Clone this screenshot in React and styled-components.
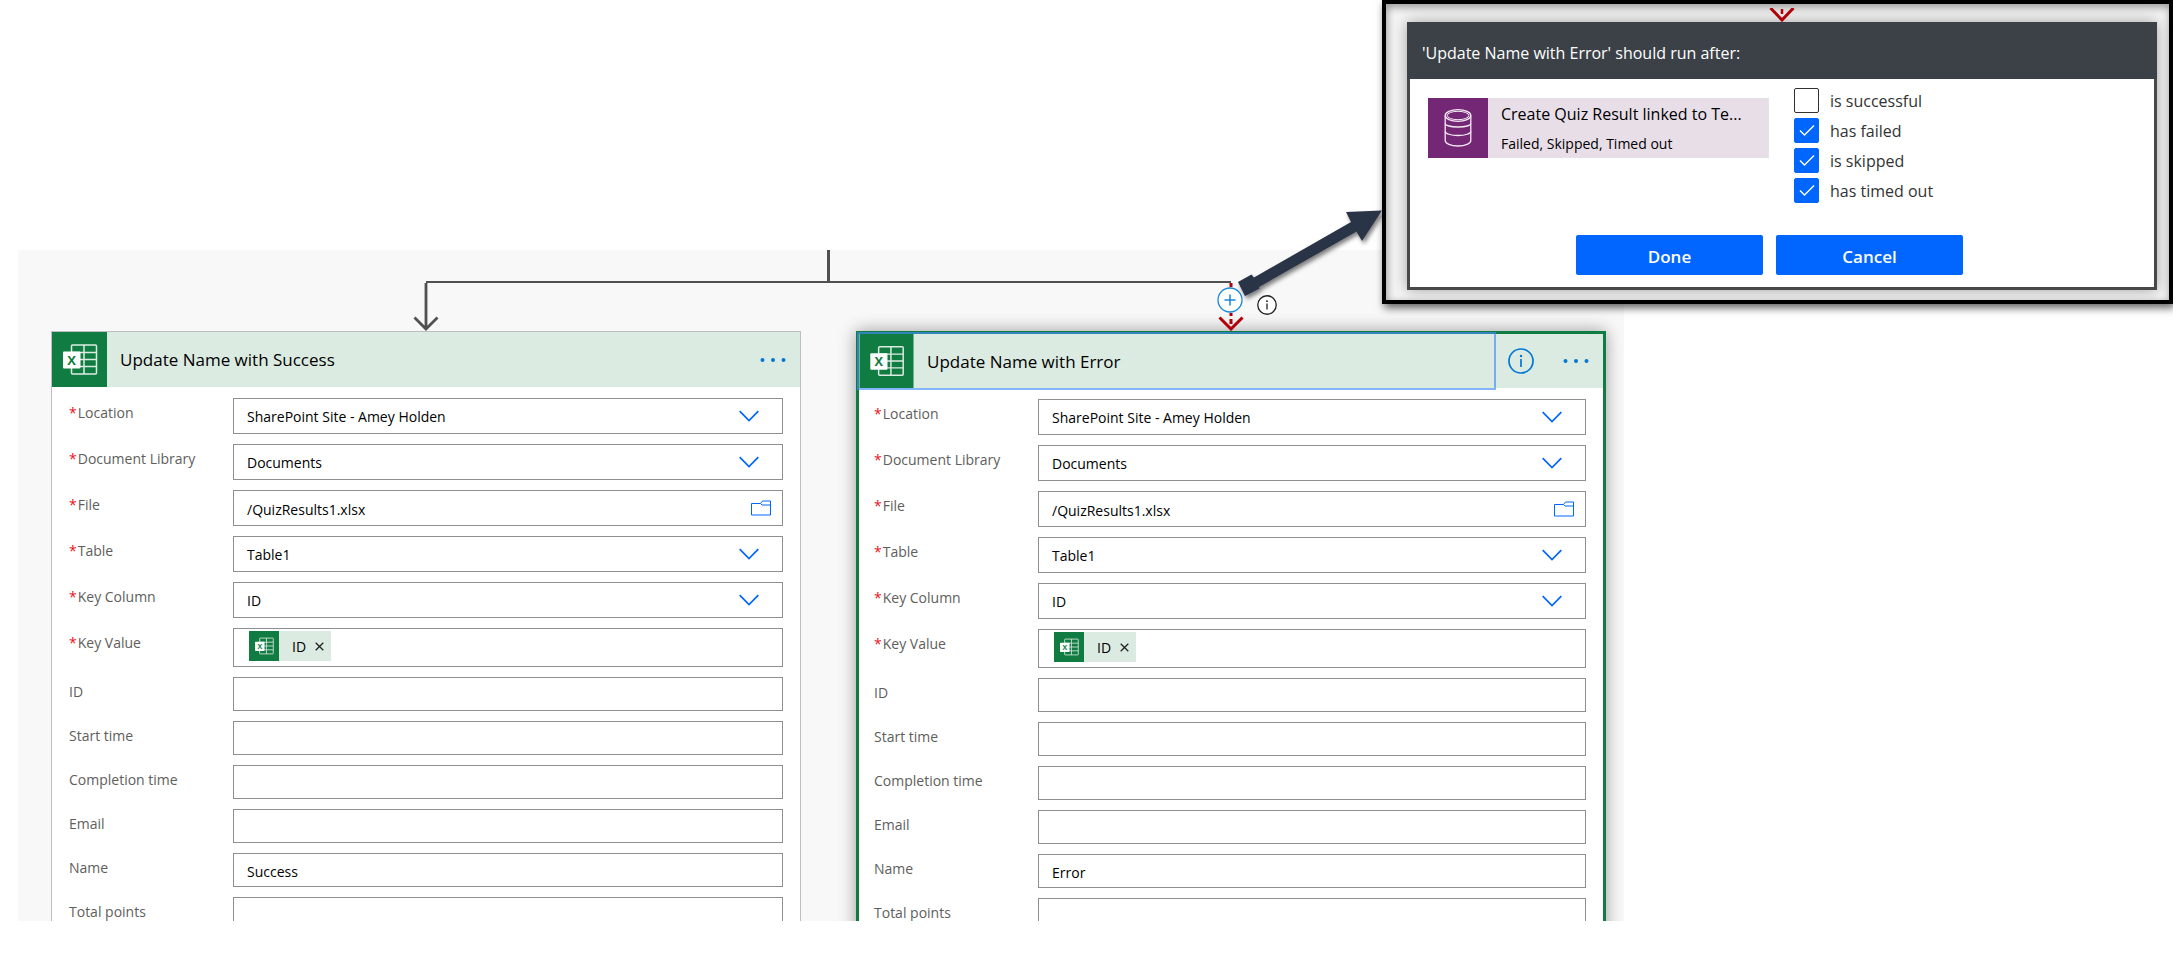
import * as React from "react"
import styled, { createGlobalStyle, css } from "styled-components"

const GlobalStyle = createGlobalStyle`
  :root {
    --blue: #0066ff;
    --link: #0078d4;
    --excel: #107c41;
    --excel-light: #dcebe2;
    --line: #505050;
    --font-size-14: 14px;
    --font-size-16: 16px;
    --font-size-17: 17px;
  }

  * {
    box-sizing: border-box;
  }

  body {
    margin: 0;
    background: #fff;
    color: #000;
    font-family: "Segoe UI", "Open Sans", sans-serif;
    font-size: var(--font-size-14);
  }

  button,
  input,
  select {
    font: inherit;
    color: inherit;
  }
`

const Page = styled.main`
  position: relative;
  display: flex;
  flex-direction: column;
  height: 100vh;
  padding: 250px 549px 33px 18px;
  overflow: hidden;
`

const Canvas = styled.section`
  flex: 1;
  min-height: 0;
  padding: 0 18px 0 33px;
  background: #f8f8f8;
  overflow: hidden;
`

const Trunk = styled.div`
  width: 3px;
  height: 31px;
  margin: 0 auto;
  background: var(--line);
`

const Crossbar = styled.div`
  width: calc(50% + 28px);
  height: 2px;
  margin: 0 auto;
  background: var(--line);
`

const Columns = styled.div`
  display: grid;
  grid-template-columns: 1fr 1fr;
  gap: 55px;
`

const Branch = styled.div`
  position: relative;
  z-index: 1;
  display: flex;
  justify-content: center;
  height: 48px;
`

const AddButton = styled.button`
  position: absolute;
  top: 4px;
  left: calc(50% - 14px);
  width: 26px;
  height: 26px;
  padding: 0;
  border: 0;
  background: none;
`

const BranchInfo = styled.button`
  position: absolute;
  top: 12px;
  left: calc(50% + 26px);
  width: 20px;
  height: 20px;
  padding: 0;
  border: 0;
  background: none;
`

const Card = styled.article`
  border: 1px solid #bebebe;
  background: #fff;

  ${props =>
    props.$selected &&
    css`
      border: 3px solid var(--excel);
      box-shadow: 0 0 16px rgba(0, 0, 0, 0.38);
    `}
`

const CardHeader = styled.header`
  display: flex;
  align-items: center;
  height: ${props => (props.$selected ? 54 : 55)}px;
  background: var(--excel-light);
`

const CardTitle = styled.button`
  flex: 1;
  display: flex;
  align-items: center;
  gap: 13px;
  height: 100%;
  padding: 0;
  border: 0;
  background: none;
  font-size: var(--font-size-17);
  text-align: left;
  outline: ${props =>
    props.$selected ? "2px solid rgba(66, 140, 246, 0.65)" : "none"};

  svg {
    height: 100%;
  }
`

const HeaderActions = styled.div`
  display: flex;
  align-items: center;
  gap: 29px;
  padding: 0 14px;
`

const IconButton = styled.button`
  display: flex;
  padding: 0;
  border: 0;
  background: none;
  color: var(--link);
`

const CardBody = styled.div`
  display: flex;
  flex-direction: column;
  gap: 10px;
  padding: 11px 17px 17px ${props => (props.$selected ? 15 : 17)}px;
`

const Row = styled.div`
  display: flex;
  align-items: flex-start;
`

const Label = styled.label`
  flex: 0 0 164px;
  display: flex;
  gap: 1px;
  padding-top: 6px;
  color: #605e5c;
  line-height: 18px;
`

const Required = styled.span`
  color: #e81123;
`

const Field = styled.div`
  flex: 1;
  display: flex;
  align-items: center;
  height: ${props => props.$height}px;
  padding: 0 ${props => props.$end}px 0 13px;
  border: 1px solid #8f8f8f;
  background: #fff;
`

const TextInput = styled.input`
  flex: 1;
  min-width: 0;
  height: 100%;
  padding: 2px 0 0;
  border: 0;
  background: none;
  outline: 0;
`

const Select = styled.select`
  flex: 1;
  min-width: 0;
  height: 100%;
  padding: 0;
  border: 0;
  background: none;
  outline: 0;
  appearance: none;
`

const Token = styled.span`
  display: flex;
  align-items: center;
  gap: 9px;
  height: 30px;
  margin: 0 8px 3px 2px;
  padding-right: 7px;
  background: var(--excel-light);
`

const TokenLabel = styled.span`
  padding-left: 4px;
`

const Callout = styled.aside`
  position: absolute;
  top: 0;
  right: 0;
  z-index: 2;
  width: 791px;
  padding: 4px 12px 10px 21px;
  border: 4px solid #000;
  background: #f5f5f5;
  box-shadow: 2px 4px 8px rgba(0, 0, 0, 0.6),
    inset 1px 3px 8px rgba(0, 0, 0, 0.4);
`

const Pointer = styled.svg`
  position: absolute;
  top: 196px;
  right: calc(100% + 4px);
  overflow: visible;
  filter: drop-shadow(2px 3px 2px rgba(0, 0, 0, 0.5));
`

const CalloutArrow = styled.svg`
  display: block;
  margin: 0 auto;
`

const Dialog = styled.form`
  border: 3px solid #484848;
  border-top: 0;
  background: #fff;
  box-shadow: 0 0 14px rgba(0, 0, 0, 0.35);
`

const DialogTitle = styled.h2`
  margin: 0 -3px;
  padding: 3px 15px 0;
  height: 57px;
  background: #3b4147;
  color: #fff;
  font-size: var(--font-size-16);
  font-weight: 400;
  line-height: 56px;
`

const DialogBody = styled.div`
  display: flex;
  gap: 25px;
  padding: 9px 18px 32px;
`

const Action = styled.div`
  display: flex;
  flex: 0 0 341px;
  min-width: 0;
  height: 60px;
  margin-top: 10px;
  background: #e8dee8;
`

const ActionText = styled.div`
  flex: 1;
  min-width: 0;
  padding: 0 13px;
`

const ActionName = styled.div`
  font-size: var(--font-size-16);
  line-height: 32px;
  white-space: nowrap;
`

const ActionStatus = styled.div`
  line-height: 28px;
`

const Checks = styled.div`
  display: flex;
  flex-direction: column;
  gap: 5px;
`

const Check = styled.label`
  position: relative;
  display: flex;
  align-items: center;
  gap: 11px;
  height: 25px;
  color: #333;
  font-size: var(--font-size-16);
  line-height: 28px;

  svg {
    position: absolute;
    left: 0;
    top: 0;
    pointer-events: none;
  }
`

const CheckInput = styled.input`
  appearance: none;
  width: 25px;
  height: 25px;
  margin: 0;
  border: 1px solid #323130;
  border-radius: 2px;
  background: #fff;

  &:checked {
    border-color: var(--blue);
    background: var(--blue);
  }

  &:not(:checked) ~ svg {
    display: none;
  }
`

const DialogFooter = styled.div`
  display: flex;
  justify-content: center;
  gap: 13px;
  padding: 0 25px 12px 0;
`

const Button = styled.button`
  width: 187px;
  height: 40px;
  padding: 2px 0 0;
  border: 0;
  border-radius: 2px;
  background: var(--blue);
  color: #fff;
  font-size: var(--font-size-17);
  font-weight: 600;
`

const ExcelIcon = ({ size }) => (
  <svg width={size} height={size} viewBox="0 0 55 55" aria-hidden="true">
    <rect width="55" height="55" fill="#107c41" />
    <g fill="none" stroke="#dcebe2" strokeWidth="1.5">
      <rect x="19.5" y="13" width="25" height="29" rx="1" />
      <path d="M32 13v29M19.5 20.500h25M28 27.500h16.500M19.5 34.500h25" />
    </g>
    <rect x="11" y="19.500" width="17.500" height="17" rx="1" fill="#fff" />
    <text
      x="19.700"
      y="33"
      fill="#107c41"
      fontFamily="Open Sans, sans-serif"
      fontSize="13"
      fontWeight="700"
      textAnchor="middle"
    >
      X
    </text>
  </svg>
)

const DatabaseIcon = () => (
  <svg width="60" height="60" viewBox="0 0 60 60" aria-hidden="true">
    <rect width="60" height="60" fill="#742774" />
    <g fill="none" stroke="#f3e9f3" strokeWidth="1.300">
      <ellipse cx="30" cy="17.500" rx="12.800" ry="5.800" />
      <ellipse cx="30" cy="17.500" rx="10.800" ry="4.200" strokeWidth="1" />
      <path d="M17.200 17.500v25c0 3 5.500 5.500 12.800 5.500s12.800-2.500 12.800-5.500v-25" />
      <path d="M17.200 25.500c0 2 5.500 3.500 12.800 3.500s12.800-1.500 12.800-3.500M17.200 33.500c0 2 5.500 4 12.800 4s12.800-2 12.800-4" />
    </g>
  </svg>
)

const InfoIcon = ({ size, stroke, fill = "none" }) => (
  <svg width={size} height={size} viewBox="0 0 26 26" aria-hidden="true">
    <circle cx="13" cy="13" r="12" fill={fill} stroke={stroke} strokeWidth="1.700" />
    <path d="M13 11v8" stroke={stroke} strokeWidth="1.700" />
    <circle cx="13" cy="8" r="1.200" fill={stroke} />
  </svg>
)

const DotsIcon = () => (
  <svg width="26" height="6" viewBox="0 0 26 6" aria-hidden="true">
    <g fill="currentColor">
      <circle cx="2.500" cy="3" r="2" />
      <circle cx="13" cy="3" r="2" />
      <circle cx="23.500" cy="3" r="2" />
    </g>
  </svg>
)

const ChevronIcon = () => (
  <svg width="20" height="12" viewBox="0 0 20 12" aria-hidden="true">
    <path d="M.700 1.200l9.300 9.300 9.300-9.300" fill="none" stroke="#0066ff" strokeWidth="1.700" />
  </svg>
)

const FolderIcon = () => (
  <svg width="20" height="16" viewBox="0 0 20 16" aria-hidden="true">
    <path
      d="M.500 3.500h9l2-2.500h8v14h-19zM9.500 3.500l1.500 1.500h8.500"
      fill="none"
      stroke="#0066ff"
    />
  </svg>
)

const CloseIcon = () => (
  <svg width="9" height="9" viewBox="0 0 9 9" aria-hidden="true">
    <path d="M.700 .700l7.600 7.600M8.300 .700l-7.600 7.600" stroke="#222" strokeWidth="1.300" />
  </svg>
)

const fields = [
  { name: "Location", kind: "select", value: "SharePoint Site - Amey Holden" },
  { name: "Document Library", kind: "select", value: "Documents" },
  { name: "File", kind: "file", value: "/QuizResults1.xlsx" },
  { name: "Table", kind: "select", value: "Table1" },
  { name: "Key Column", kind: "select", value: "ID" },
  { name: "Key Value", kind: "token", value: "ID" },
  { name: "ID" },
  { name: "Start time" },
  { name: "Completion time" },
  { name: "Email" },
  { name: "Name" },
  { name: "Total points" },
]

const FieldControl = ({ id, kind, value }) => {
  if (kind === "select") {
    return (
      <Field $height={36} $end={23}>
        <Select id={id}>
          <option>{value}</option>
        </Select>
        <ChevronIcon />
      </Field>
    )
  }
  if (kind === "file") {
    return (
      <Field $height={36} $end={11}>
        <TextInput id={id} defaultValue={value} />
        <IconButton type="button" aria-label="Browse files">
          <FolderIcon />
        </IconButton>
      </Field>
    )
  }
  if (kind === "token") {
    return (
      <Field $height={39} $end={13}>
        <Token>
          <ExcelIcon size={30} />
          <TokenLabel>{value}</TokenLabel>
          <IconButton type="button" aria-label="Remove ID">
            <CloseIcon />
          </IconButton>
        </Token>
        <TextInput id={id} />
      </Field>
    )
  }
  return (
    <Field $height={34} $end={13}>
      <TextInput id={id} defaultValue={value} />
    </Field>
  )
}

const ActionCard = ({ prefix, title, name, selected }) => (
  <Card $selected={selected}>
    <CardHeader $selected={selected}>
      <CardTitle type="button" $selected={selected}>
        <ExcelIcon size={55} />
        {title}
      </CardTitle>
      <HeaderActions>
        {selected && (
          <IconButton type="button" aria-label="Run after settings">
            <InfoIcon size={26} stroke="#0078d4" />
          </IconButton>
        )}
        <IconButton type="button" aria-label="More options">
          <DotsIcon />
        </IconButton>
      </HeaderActions>
    </CardHeader>
    <CardBody $selected={selected}>
      {fields.map(field => {
        const id = `${prefix}-${field.name.toLowerCase().replace(" ", "-")}`
        return (
          <Row key={field.name}>
            <Label htmlFor={id}>
              {field.kind && <Required>*</Required>}
              {field.name}
            </Label>
            <FieldControl
              id={id}
              kind={field.kind}
              value={field.name === "Name" ? name : field.value}
            />
          </Row>
        )
      })}
    </CardBody>
  </Card>
)

const RunAfterCheck = ({ label, checked }) => (
  <Check>
    <CheckInput type="checkbox" defaultChecked={checked} />
    <svg width="25" height="25" viewBox="0 0 25 25" aria-hidden="true">
      <path d="M6 12.500l4.500 4.500 9.500-9.500" fill="none" stroke="#fff" strokeWidth="1.400" />
    </svg>
    {label}
  </Check>
)

const RunAfterCallout = () => (
  <Callout>
    <Pointer width="144" height="100" viewBox="0 0 144 100" aria-hidden="true">
      <path
        d="M0 82l13.500-7.500 2.500 3L113 22l-5-10 36-1.500L124 41l-5.500-9.500L21 87l.500 1.500L7 96z"
        fill="#2a3447"
      />
    </Pointer>
    <CalloutArrow width="26" height="14" viewBox="0 0 26 14" aria-hidden="true">
      <path d="M1.500 0l11.500 12L24.500 0" fill="none" stroke="#b00008" strokeWidth="3" />
      <path d="M13 1v5" stroke="#b00008" strokeWidth="2.500" />
    </CalloutArrow>
    <Dialog>
      <DialogTitle>'Update Name with Error' should run after:</DialogTitle>
      <DialogBody>
        <Action>
          <DatabaseIcon />
          <ActionText>
            <ActionName>Create Quiz Result linked to Te...</ActionName>
            <ActionStatus>Failed, Skipped, Timed out</ActionStatus>
          </ActionText>
        </Action>
        <Checks>
          <RunAfterCheck label="is successful" />
          <RunAfterCheck label="has failed" checked />
          <RunAfterCheck label="is skipped" checked />
          <RunAfterCheck label="has timed out" checked />
        </Checks>
      </DialogBody>
      <DialogFooter>
        <Button type="button">Done</Button>
        <Button type="button">Cancel</Button>
      </DialogFooter>
    </Dialog>
  </Callout>
)

const App = () => {
  return (
    <>
      <GlobalStyle />
      <Page>
        <Canvas>
          <Trunk />
          <Crossbar />
          <Columns>
            <Branch>
              <svg width="26" height="48" viewBox="0 0 26 48" aria-hidden="true">
                <path
                  d="M13 0v46M1.500 34.500L13 46l11.500-11.500"
                  fill="none"
                  stroke="#505050"
                  strokeWidth="2.800"
                />
              </svg>
            </Branch>
            <Branch>
              <svg width="26" height="48" viewBox="0 0 26 48" aria-hidden="true">
                <path
                  d="M13 0v4M13 30v3M13 36v5M1.500 34.500L13 46l11.500-11.500"
                  fill="none"
                  stroke="#b00008"
                  strokeWidth="3"
                />
              </svg>
              <AddButton type="button" aria-label="Insert a new step">
                <svg width="26" height="26" viewBox="0 0 26 26" aria-hidden="true">
                  <circle cx="13" cy="13" r="12" fill="#fff" stroke="#1a86d9" strokeWidth="1.300" />
                  <path d="M13 7.500v11M7.500 13h11" stroke="#1a86d9" strokeWidth="1.500" />
                </svg>
              </AddButton>
              <BranchInfo type="button" aria-label="Run after information">
                <InfoIcon size={20} stroke="#222" fill="#fff" />
              </BranchInfo>
            </Branch>
          </Columns>
          <Columns>
            <ActionCard
              prefix="success"
              title="Update Name with Success"
              name="Success"
            />
            <ActionCard
              prefix="error"
              title="Update Name with Error"
              name="Error"
              selected
            />
          </Columns>
        </Canvas>
        <RunAfterCallout />
      </Page>
    </>
  )
}

export default App
